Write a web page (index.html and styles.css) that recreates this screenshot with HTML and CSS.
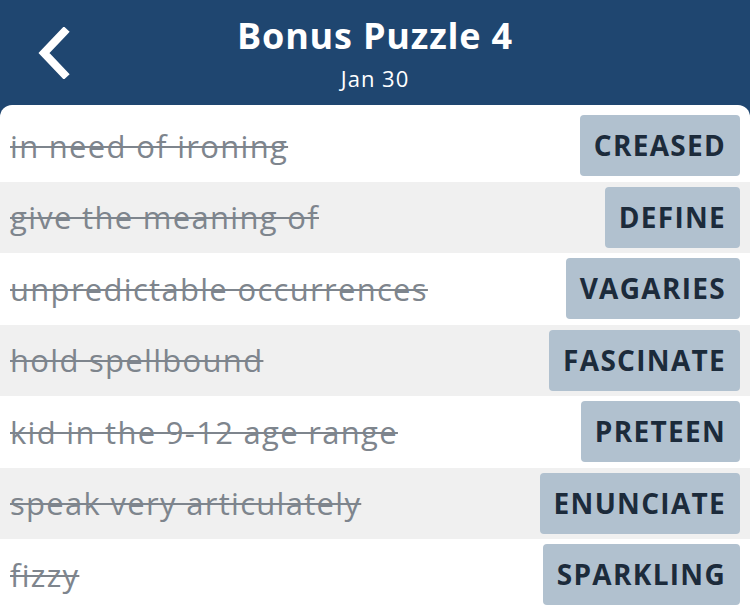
FILE: index.html
```html
<!DOCTYPE html>
<html lang="en">
<head>
  <meta charset="UTF-8">
  <title>Bonus Puzzle 4</title>
  <link rel="stylesheet" href="styles.css">
</head>
<body>
  <div class="header">
    <a class="back" href="#">
      <svg width="34" height="52" viewBox="0 0 34 52">
        <path d="M28 5 L8 26 L28 47" fill="none" stroke="#fff" stroke-width="8" stroke-linecap="square"/>
      </svg>
    </a>
    <div class="titulo">
      <h1>Bonus Puzzle 4</h1>
      <div class="fecha">Jan 30</div>
    </div>
  </div>

  <div class="lista">
    <div class="fila">
      <span class="pista">in need of ironing</span>
      <span class="respuesta">CREASED</span>
    </div>
    <div class="fila gris">
      <span class="pista">give the meaning of</span>
      <span class="respuesta">DEFINE</span>
    </div>
    <div class="fila">
      <span class="pista">unpredictable occurrences</span>
      <span class="respuesta">VAGARIES</span>
    </div>
    <div class="fila gris">
      <span class="pista">hold spellbound</span>
      <span class="respuesta">FASCINATE</span>
    </div>
    <div class="fila">
      <span class="pista">kid in the 9-12 age range</span>
      <span class="respuesta">PRETEEN</span>
    </div>
    <div class="fila gris">
      <span class="pista">speak very articulately</span>
      <span class="respuesta">ENUNCIATE</span>
    </div>
    <div class="fila">
      <span class="pista">fizzy</span>
      <span class="respuesta">SPARKLING</span>
    </div>
  </div>
</body>
</html>
```

FILE: styles.css
```css
body {
  margin: 0;
  font-family: "Open Sans", Arial, sans-serif;
  background-color: #1f4670;
  height: 611px;
  overflow: hidden;
}

.header {
  position: relative;
  height: 105px;
  color: white;
}

.back {
  position: absolute;
  left: 36px;
  top: 27px;
}

.titulo {
  text-align: center;
  padding-top: 13px;
}

h1 {
  margin: 0;
  font-size: 36px;
  font-weight: 700;
  line-height: 46px;
  letter-spacing: 0.8px;
}

.fecha {
  font-size: 22px;
  line-height: 28px;
  margin-top: 5px;
  letter-spacing: 1px;
}

.lista {
  background-color: white;
  border-radius: 12px 12px 0 0;
  padding-top: 5px;
  height: 506px;
}

.fila {
  height: 71.5px;
  display: flex;
  align-items: center;
  justify-content: space-between;
  padding: 0 10px;
  box-sizing: border-box;
}

.gris {
  background-color: #f0f0f0;
}

.pista {
  font-size: 31px;
  letter-spacing: 1.3px;
  color: #7e858d;
  text-decoration: line-through;
  text-decoration-thickness: 2px;
}

.respuesta {
  background-color: #b1c1cf;
  color: #1c2b3b;
  font-size: 28px;
  font-weight: 700;
  letter-spacing: 1.3px;
  height: 61px;
  line-height: 61px;
  padding: 0 14px;
  border-radius: 4px;
}
```
